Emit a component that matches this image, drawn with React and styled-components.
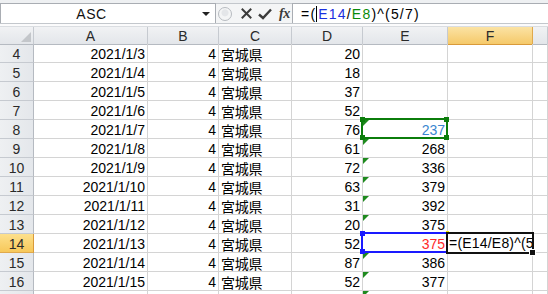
import React from 'react';
import styled, { createGlobalStyle, css } from 'styled-components';

const Global = createGlobalStyle`
  html, body { margin: 0; padding: 0; background: #ffffff; overflow: hidden; }
  body { font-family: "Liberation Sans", Arial, "Noto Sans CJK JP", sans-serif; }
`;

const COLS = '34px 114px 71px 73px 71px 85px 85px 1fr';
const GRID = '#d4d4d4';
const HEAD_LINE = '#c6cad0';

const Page = styled.div`
  width: 548px;
  height: 294px;
  overflow: hidden;
  background: #fff;
  color: #000;
`;

const FormulaBar = styled.div`
  display: flex;
  align-items: stretch;
  height: 23px;
  padding-top: 3px;
  box-sizing: border-box;
  background: #eef0f2;
`;

const NameBox = styled.div`
  width: 216px;
  box-sizing: border-box;
  background: #fff;
  border: 1px solid #a9adb3;
  border-bottom: 0;
  display: flex;
  align-items: center;
  font-size: 14px;
  color: #111;
`;

const NameText = styled.span`
  flex: 1;
  text-align: center;
  padding-right: 20px;
  letter-spacing: 0.5px;
  line-height: 16px;
  padding-top: 1px;
`;

const DropArrow = styled.span`
  width: 0;
  height: 0;
  border-left: 4px solid transparent;
  border-right: 4px solid transparent;
  border-top: 4px solid #222;
  margin-right: 5px;
`;

const Buttons = styled.div`
  width: 76px;
  display: flex;
  align-items: center;
  background: #f4f5f6;
  border-top: 1px solid #c3c7cc;
  box-sizing: border-box;
`;

const Handle = styled.span`
  width: 14px;
  height: 14px;
  margin-left: 2px;
  border-radius: 50%;
  border: 1px solid #b7bbc0;
  background: radial-gradient(circle at 50% 40%, #e4e6e9 0 3px, #f4f5f6 4px);
  box-sizing: border-box;
`;

const IconSlot = styled.span`
  display: flex;
  align-items: center;
  justify-content: center;
  width: ${p => p.$w}px;
  margin-left: ${p => p.$ml}px;
`;

const Fx = styled.span`
  font-family: "Liberation Serif", "Times New Roman", serif;
  font-style: italic;
  font-weight: bold;
  font-size: 14px;
  color: #3a3a3a;
  margin-left: 7px;
  letter-spacing: -0.5px;
`;

const FormulaInput = styled.div`
  flex: 1;
  background: #fff;
  border: 1px solid #a9adb3;
  border-bottom: 0;
  border-right: 0;
  display: flex;
  align-items: center;
  padding-left: 8px;
  font-size: 14px;
  letter-spacing: 1.2px;
  white-space: nowrap;
`;

const Ref = styled.span`
  color: ${p => p.$c};
`;

const Caret = styled.span`
  display: inline-block;
  width: 1px;
  height: 16px;
  background: #000;
  margin: 0 1px 0 0;
`;

const Splitter = styled.div`
  height: 4px;
  box-sizing: border-box;
  background: #fbfbfc;
  border-top: 1px solid #c3c7cc;
  border-bottom: 1px solid #dadde1;
`;

const HeaderRow = styled.div`
  display: grid;
  grid-template-columns: ${COLS};
  height: 17px;
`;

const HeadCell = styled.div`
  box-sizing: border-box;
  border-right: 1px solid ${HEAD_LINE};
  border-bottom: 1px solid #b5bac1;
  background: linear-gradient(#f1f2f4, #e3e6ea);
  text-align: center;
  font-size: 14px;
  line-height: 15px;
  padding-top: 2px;
  color: #2a2a2a;
  position: relative;
  ${p => p.$active && css`
    background: linear-gradient(#fbe3a4, #f5c96a);
    border-right-color: #e0a94c;
    border-bottom-color: #d99a3a;
  `}
  ${p => p.$corner && css`
    &::after {
      content: '';
      position: absolute;
      right: 2px;
      bottom: 2px;
      width: 0;
      height: 0;
      border-left: 10px solid transparent;
      border-bottom: 10px solid #c3c6ca;
    }
  `}
`;

const Row = styled.div`
  display: grid;
  grid-template-columns: ${COLS};
  height: 19px;
`;

const RowHead = styled.div`
  box-sizing: border-box;
  border-right: 1px solid #b5bac1;
  border-bottom: 1px solid ${HEAD_LINE};
  background: linear-gradient(90deg, #eef0f2, #e4e7eb);
  text-align: center;
  font-size: 14px;
  line-height: 16px;
  padding-top: 2px;
  color: #2a2a2a;
  ${p => p.$active && css`
    background: linear-gradient(#fde08c, #f7c85a);
    border-bottom-color: #e0a94c;
    border-right-color: #d99a3a;
  `}
`;

const Cell = styled.div`
  box-sizing: border-box;
  border-right: 1px solid ${GRID};
  border-bottom: 1px solid ${GRID};
  font-size: 14px;
  line-height: 16px;
  padding: 2px 2px 0 3px;
  text-align: ${p => p.$align || 'right'};
  color: ${p => p.$color || '#000'};
  white-space: nowrap;
  position: relative;
  ${p => p.$jp && css`
    font-family: "Noto Sans CJK JP", sans-serif;
    padding-left: 2px;
    letter-spacing: -0.3px;
  `}
  ${p => p.$flag && css`
    &::before {
      content: '';
      position: absolute;
      left: 0;
      top: 0;
      width: 0;
      height: 0;
      border-top: 6px solid #1e8a1e;
      border-right: 6px solid transparent;
    }
  `}
`;

const RangeBox = styled.div`
  position: absolute;
  left: -2px;
  top: -2px;
  right: -1px;
  bottom: -1px;
  border: 2px solid ${p => p.$c};
  pointer-events: none;
  z-index: 2;
`;

const Knob = styled.span`
  position: absolute;
  width: ${p => p.$w || 5}px;
  height: 5px;
  background: ${p => p.$c};
  ${p => (p.$t ? 'top: -3px;' : 'bottom: -3px;')}
  ${p => (p.$l ? 'left: -3px;' : 'right: -3px;')}
`;

const EditBox = styled.div`
  position: absolute;
  left: -2px;
  top: -2px;
  right: -2px;
  bottom: -2px;
  border: 2px solid #111;
  background: #fff;
  z-index: 3;
  overflow: hidden;
  text-align: left;
  padding: 1px 0 0 1px;
  font-size: 14px;
  line-height: 16px;
  letter-spacing: 0.2px;
  color: #000;
`;

const FillHandle = styled.span`
  position: absolute;
  right: -4px;
  bottom: -4px;
  width: 5px;
  height: 5px;
  background: #111;
  border: 1px solid #fff;
  z-index: 4;
`;

const rows = [
  [4, '2021/1/3', 20, ''],
  [5, '2021/1/4', 18, ''],
  [6, '2021/1/5', 37, ''],
  [7, '2021/1/6', 52, ''],
  [8, '2021/1/7', 76, 237],
  [9, '2021/1/8', 61, 268],
  [10, '2021/1/9', 72, 336],
  [11, '2021/1/10', 63, 379],
  [12, '2021/1/11', 31, 392],
  [13, '2021/1/12', 20, 375],
  [14, '2021/1/13', 52, 375],
  [15, '2021/1/14', 87, 386],
  [16, '2021/1/15', 52, 377],
];

function CrossIcon() {
  return (
    <svg width="11" height="11" viewBox="0 0 11 11">
      <path d="M1.5 1.5 L9.5 9.5 M9.5 1.5 L1.5 9.5" stroke="#3b3b3b" strokeWidth="2" strokeLinecap="square" />
    </svg>
  );
}

function CheckIcon() {
  return (
    <svg width="14" height="12" viewBox="0 0 14 12">
      <path d="M1 6.5 L5 10 L13 1.5" stroke="#3b3b3b" strokeWidth="2.4" fill="none" />
    </svg>
  );
}

export default function App() {
  return (
    <Page>
      <Global />
      <FormulaBar>
        <NameBox>
          <NameText>ASC</NameText>
          <DropArrow />
        </NameBox>
        <Buttons>
          <Handle />
          <IconSlot $w={12} $ml={8}><CrossIcon /></IconSlot>
          <IconSlot $w={15} $ml={5}><CheckIcon /></IconSlot>
          <Fx>fx</Fx>
        </Buttons>
        <FormulaInput>
          =(<Caret /><Ref $c="#1a2fe0">E14</Ref>/<Ref $c="#0a8a0a">E8</Ref>)^(5/7)
        </FormulaInput>
      </FormulaBar>
      <Splitter />
      <HeaderRow>
        <HeadCell $corner />
        <HeadCell>A</HeadCell>
        <HeadCell>B</HeadCell>
        <HeadCell>C</HeadCell>
        <HeadCell>D</HeadCell>
        <HeadCell>E</HeadCell>
        <HeadCell $active>F</HeadCell>
        <HeadCell />
      </HeaderRow>
      {rows.map(([n, date, d, e]) => {
        const isE8 = n === 8;
        const isE14 = n === 14;
        return (
          <Row key={n}>
            <RowHead $active={isE14}>{n}</RowHead>
            <Cell>{date}</Cell>
            <Cell>4</Cell>
            <Cell $jp $align="left">宮城県</Cell>
            <Cell>{d}</Cell>
            <Cell
              $flag={e !== '' && !isE14}
              $color={isE8 ? '#3a86d0' : isE14 ? '#ff2a2a' : undefined}
            >
              {e}
              {isE8 && (
                <RangeBox $c="#0b7d0b">
                  <Knob $c="#0b7d0b" $t $l />
                  <Knob $c="#0b7d0b" $t />
                  <Knob $c="#0b7d0b" $l />
                  <Knob $c="#0b7d0b" />
                </RangeBox>
              )}
              {isE14 && (
                <RangeBox $c="#1a1aff">
                  <Knob $c="#1a1aff" $t $l />
                  <Knob $c="#1a1aff" $l />
                  <Knob $c="#f2e600" $w={3} $t />
                  <Knob $c="#f2e600" $w={3} />
                </RangeBox>
              )}
            </Cell>
            <Cell>
              {isE14 && (
                <>
                  <EditBox>=(E14/E8)^(5</EditBox>
                  <FillHandle />
                </>
              )}
            </Cell>
            <Cell />
          </Row>
        );
      })}
      <Row>
        <RowHead />
        <Cell />
        <Cell />
        <Cell />
        <Cell />
        <Cell $flag />
        <Cell />
        <Cell />
      </Row>
    </Page>
  );
}
